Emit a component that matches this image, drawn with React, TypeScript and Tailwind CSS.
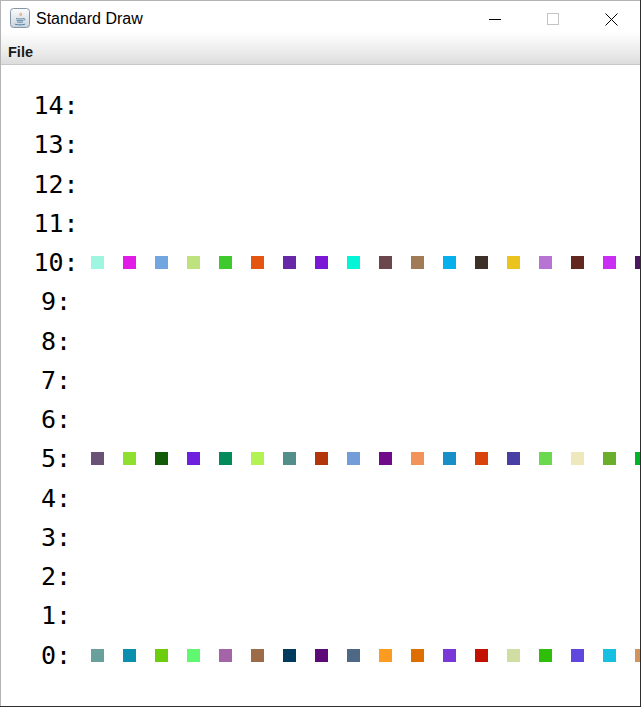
import React from "react";

const row10 = [
  "bg-[#9ef5e0]", "bg-[#e01ce6]", "bg-[#72a6e0]", "bg-[#bde27e]", "bg-[#3ec92c]", "bg-[#e4560f]",
  "bg-[#6628a7]", "bg-[#7a18d6]", "bg-[#02f5d6]", "bg-[#6b474d]", "bg-[#a07b55]", "bg-[#05b0ec]",
  "bg-[#3d3029]", "bg-[#ebc31f]", "bg-[#b874d2]", "bg-[#622820]", "bg-[#c92ef2]", "bg-[#4a1760]",
];
const row5 = [
  "bg-[#6a5277]", "bg-[#8edf30]", "bg-[#125a06]", "bg-[#6f1fde]", "bg-[#018b5a]", "bg-[#b2f253]",
  "bg-[#528e8a]", "bg-[#b3350a]", "bg-[#729dd8]", "bg-[#700a8a]", "bg-[#f2945a]", "bg-[#198fc8]",
  "bg-[#d9430c]", "bg-[#483ea3]", "bg-[#6ad94d]", "bg-[#efe8bd]", "bg-[#6aae2b]", "bg-[#00b52a]",
];
const row0 = [
  "bg-[#6aa09c]", "bg-[#0b8fae]", "bg-[#6bcd0b]", "bg-[#60f870]", "bg-[#a465a8]", "bg-[#9c6b48]",
  "bg-[#003a5e]", "bg-[#5c0a77]", "bg-[#4e6886]", "bg-[#fd9c21]", "bg-[#de6e00]", "bg-[#7a38d8]",
  "bg-[#c21003]", "bg-[#d0dea4]", "bg-[#2fbf0b]", "bg-[#6047de]", "bg-[#17c0e0]", "bg-[#d2945c]",
];

const squares: Record<number, string[]> = { 10: row10, 5: row5, 0: row0 };

function JavaIcon() {
  return (
    <svg width="20" height="20" viewBox="0 0 20 20">
      <defs>
        <linearGradient id="jg" x1="0" y1="0" x2="0" y2="1">
          <stop offset="0" stopColor="#fbfcfd" />
          <stop offset="1" stopColor="#c9d3dc" />
        </linearGradient>
      </defs>
      <rect x="0.5" y="0.5" width="19" height="19" rx="3" fill="url(#jg)" stroke="#8497a8" />
      <path d="M10.5 3.5c1.5 1.5-1.8 2.6-.6 4.4.4.6 1.2 1 1.2 1s-1.2-.6-1.6-1.3C8.4 5.8 11.6 5 10.5 3.5z" fill="#e76f00" />
      <path d="M12 5.2c-1.6 1-1.3 2-.6 2.8" stroke="#e76f00" strokeWidth="0.8" fill="none" />
      <path d="M6 10.5c2 .6 6 .6 8 0M6.5 12.3c1.8.5 5.2.5 7 0M7 14c1.6.4 4.4.4 6 0" stroke="#5382a1" strokeWidth="0.9" fill="none" />
      <path d="M5 16.2c3 .9 7 .9 10 0" stroke="#5382a1" strokeWidth="1" fill="none" />
      <path d="M13.8 10.8c1.4-.4 1.8.9.2 1.6" stroke="#5382a1" strokeWidth="0.8" fill="none" />
    </svg>
  );
}

export default function App() {
  const labels = Array.from({ length: 15 }, (_, i) => 14 - i);
  return (
    <div className="w-[641px] h-[707px] bg-[#2e2e2e] overflow-hidden">
      <div className="w-[640px] h-[706px] bg-white border-t border-l border-[#b4b4b4] flex flex-col overflow-hidden">
        {/* Title bar */}
        <div className="h-[30px] flex items-start shrink-0 bg-white">
          <div className="ml-[9px] mt-[7px]">
            <JavaIcon />
          </div>
          <div
            className="ml-[6px] mt-[8px] text-[16px] leading-[20px] text-black"
            style={{ fontFamily: '"Liberation Sans", Arial, sans-serif' }}
          >
            Standard Draw
          </div>
          <div className="flex-1" />
          <div className="w-[58px] h-[30px] flex items-center justify-center pt-[6px]">
            <div className="w-[12px] h-px bg-black" />
          </div>
          <div className="w-[58px] h-[30px] flex items-center justify-center pt-[6px]">
            <div className="w-[12px] h-[12px] border border-[#c4c4c4]" />
          </div>
          <div className="w-[58px] h-[30px] flex items-center justify-center pt-[6px]">
            <svg width="13" height="13" viewBox="0 0 13 13">
              <path d="M0.5 0.5L12.5 12.5M12.5 0.5L0.5 12.5" stroke="#000" strokeWidth="1" />
            </svg>
          </div>
        </div>
        {/* Menu bar */}
        <div className="h-[34px] shrink-0 border-b border-[#c8c8c8] bg-[linear-gradient(to_bottom,#ffffff_0%,#fbfbfb_15%,#e9e9e9_70%,#dcdcdc_100%)]">
          <div
            className="ml-[7px] mt-[14px] text-[14.5px] leading-[14px] font-bold text-[#1a1a1a]"
            style={{ fontFamily: '"Liberation Sans", Arial, sans-serif' }}
          >
            File
          </div>
        </div>
        {/* Canvas */}
        <div className="flex-1 pt-[21px] overflow-hidden">
          {labels.map((n) => (
            <div key={n} className="h-[39.25px] flex items-center whitespace-nowrap">
              <div
                className="w-[79px] shrink-0 pl-[31px] flex justify-center text-[25px] leading-none text-black"
                style={{ fontFamily: '"DejaVu Sans Mono", "Liberation Mono", monospace' }}
              >
                {n}:
              </div>
              {squares[n] && (
                <div className="ml-[11px] flex gap-[19px]">
                  {squares[n].map((c, i) => (
                    <div key={i} className={`w-[13px] h-[13px] shrink-0 ${c}`} />
                  ))}
                </div>
              )}
            </div>
          ))}
        </div>
      </div>
    </div>
  );
}
